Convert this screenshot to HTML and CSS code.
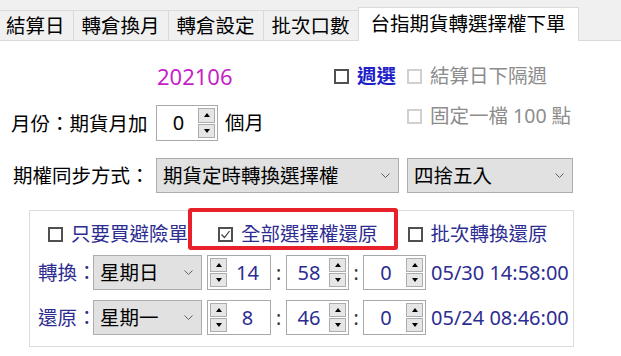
FILE: index.html
```html
<!DOCTYPE html>
<html lang="zh-TW">
<head>
  <meta charset="UTF-8" />
  <title>台指期貨轉選擇權下單</title>
  <meta name="viewport" content="width=device-width, initial-scale=1.0"/>
  <link rel="stylesheet" href="styles.css">
</head>
<body>

  <!-- TABS -->
  <div class="tabs">
    <div class="tab">結算日</div>
    <div class="tab">轉倉換月</div>
    <div class="tab">轉倉設定</div>
    <div class="tab">批次口數</div>
    <div class="tab active">台指期貨轉選擇權下單</div>
  </div>

  <div class="page">

    <!-- MONTH SECTION -->
    <div class="top">
      <div class="top-left">
        <div class="code-row">
          <span class="code">202106</span>
          <span class="chk weekly"><span class="box"></span>週選</span>
        </div>
        <div class="month-row">
          <span class="label">月份<span class="colon">：</span>期貨月加</span>
          <div class="spin month">
            <span class="val">0</span>
            <span class="btns"><i class="up"></i><i class="down"></i></span>
          </div>
          <span class="unit">個月</span>
        </div>
      </div>
      <div class="top-right">
        <span class="chk off"><span class="box"></span>結算日下隔週</span>
        <span class="chk off"><span class="box"></span>固定一檔 100 點</span>
      </div>
    </div>

    <!-- SYNC SECTION -->
    <div class="sync">
      <span class="label">期權同步方式<span class="colon">：</span></span>
      <div class="select wide">期貨定時轉換選擇權
        <svg viewBox="0 0 9 5"><polyline points="0.5,0.5 4.5,4.5 8.5,0.5" /></svg>
      </div>
      <div class="select round">四捨五入
        <svg viewBox="0 0 9 5"><polyline points="0.5,0.5 4.5,4.5 8.5,0.5" /></svg>
      </div>
    </div>

    <!-- RESTORE GROUP -->
    <div class="group">
      <div class="opts">
        <span class="chk"><span class="box"></span>只要買避險單</span>
        <span class="chk"><span class="box"><svg viewBox="0 0 11 11"><polyline points="1.5,5.5 4.5,8.5 9.5,2" /></svg></span>全部選擇權還原</span>
        <span class="chk"><span class="box"></span>批次轉換還原</span>
      </div>

      <div class="when">
        <span class="label">轉換<span class="colon">：</span></span>
        <div class="select day">星期日
          <svg viewBox="0 0 9 5"><polyline points="0.5,0.5 4.5,4.5 8.5,0.5" /></svg>
        </div>
        <div class="spin hour">
          <span class="btns"><i class="up"></i><i class="down"></i></span>
          <span class="val">14</span>
        </div>
        <span class="sep">:</span>
        <div class="spin">
          <span class="val">58</span>
          <span class="btns"><i class="up"></i><i class="down"></i></span>
        </div>
        <span class="sep last">:</span>
        <div class="spin">
          <span class="val">0</span>
          <span class="btns"><i class="up"></i><i class="down"></i></span>
        </div>
        <span class="time">05/30 14:58:00</span>
      </div>

      <div class="when">
        <span class="label">還原<span class="colon">：</span></span>
        <div class="select day">星期一
          <svg viewBox="0 0 9 5"><polyline points="0.5,0.5 4.5,4.5 8.5,0.5" /></svg>
        </div>
        <div class="spin hour">
          <span class="btns"><i class="up"></i><i class="down"></i></span>
          <span class="val">8</span>
        </div>
        <span class="sep">:</span>
        <div class="spin">
          <span class="val">46</span>
          <span class="btns"><i class="up"></i><i class="down"></i></span>
        </div>
        <span class="sep last">:</span>
        <div class="spin">
          <span class="val">0</span>
          <span class="btns"><i class="up"></i><i class="down"></i></span>
        </div>
        <span class="time">05/24 08:46:00</span>
      </div>

      <div class="mark"></div>
    </div>

  </div>

</body>
</html>
```

FILE: styles.css
```css
body {
  margin: 0;
  background: #fff;
  font-family: "Noto Sans", "Noto Sans CJK TC", sans-serif;
  font-size: 19.5px;
  line-height: 24px;
  color: #000;
  white-space: nowrap;
}

/* tabs */
.tabs {
  display: flex;
  align-items: flex-end;
  height: 41px;
  box-sizing: border-box;
  margin-left: -3px;
  background: #f0f0f0;
  border-bottom: 1px solid #dadada;
}

.tab {
  height: 30px;
  line-height: 29px;
  padding: 0 8px;
  box-sizing: border-box;
  border: 1px solid #dadada;
  border-bottom: none;
  margin-right: -1px;
}

.tab.active {
  height: 34px;
  line-height: 32px;
  padding: 0 12px;
  margin-bottom: -1px;
  background: #fff;
}

/* full-width colon: use the narrow glyph and centre it in a full cell */
.colon {
  display: inline-block;
  width: 1em;
  text-align: center;
  font-family: "Noto Sans CJK TC", sans-serif;
  font-feature-settings: "palt" 1;
}

/* checkbox */
.chk {
  display: flex;
  align-items: center;
  height: 30px;
}

.chk .box {
  display: flex;
  align-items: center;
  justify-content: center;
  width: 15px;
  height: 15px;
  box-sizing: border-box;
  border: 2px solid #505050;
  background: #fff;
  margin-right: 8px;
}

.chk .box svg {
  width: 11px;
  height: 11px;
  fill: none;
  stroke: #3a3a3a;
  stroke-width: 1.2;
}

.chk.off {
  color: #8c8c8c;
}

.chk.off .box {
  border-color: #d0d0d0;
}

/* top block */
.top {
  display: flex;
}

.top-left {
  width: 407px;
}

.code-row {
  display: flex;
  align-items: center;
  height: 30px;
  margin-top: 20px;
  padding-left: 157px;
}

.code {
  font-size: 22px;
  color: #c71fc7;
}

.weekly {
  margin-left: auto;
  margin-right: 11px;
  color: #2020c8;
  font-weight: bold;
}

.month-row {
  display: flex;
  align-items: center;
  height: 36px;
  margin-top: 14px;
  padding-left: 11px;
}

.month-row .label {
  width: 145px;
}

.unit {
  margin-left: 7px;
}

.top-right {
  display: flex;
  flex-direction: column;
  gap: 10px;
  margin-top: 20px;
}

/* numeric up-down */
.spin {
  display: flex;
  width: 63px;
  height: 35px;
  box-sizing: border-box;
  border: 1px solid #a9a9a9;
  background: #fff;
  padding: 2px;
}

.spin.month {
  width: 62px;
  height: 36px;
}

.spin.hour {
  width: 64px;
  margin-left: 5px;
}

.spin .val {
  flex: 1;
  text-align: center;
  line-height: 29px;
  font-size: 20px;
}

.btns {
  display: flex;
  flex-direction: column;
  width: 17px;
}

.btns i {
  flex: 1;
  display: flex;
  align-items: center;
  justify-content: center;
  border: 1px solid #adadad;
  background: #e6e6e6;
}

.btns i + i {
  margin-top: 1px;
}

.btns i::after {
  content: "";
  border-left: 3px solid transparent;
  border-right: 3px solid transparent;
}

.btns .up::after {
  border-bottom: 4px solid #000;
}

.btns .down::after {
  border-top: 4px solid #000;
}

/* dropdown */
.select {
  display: flex;
  align-items: center;
  justify-content: space-between;
  height: 35px;
  box-sizing: border-box;
  border: 1px solid #adadad;
  background: #e1e1e1;
  padding: 0 8px 0 6px;
  color: #000;
}

.select svg {
  width: 9px;
  height: 5px;
  fill: none;
  stroke: #606060;
  stroke-width: 1;
}

.sync {
  display: flex;
  align-items: center;
  height: 35px;
  margin-top: 17px;
  padding-left: 13px;
}

.sync .label {
  width: 143px;
}

.select.wide {
  width: 243px;
  margin-right: 8px;
}

.select.round {
  width: 166px;
}

/* group box */
.group {
  position: relative;
  width: 545px;
  box-sizing: border-box;
  margin: 17px 0 0 29px;
  padding: 11px 0;
  border: 1px solid #dcdcdc;
  color: #2d2d91;
}

.opts {
  display: flex;
  gap: 30px;
  height: 24px;
  padding-left: 18px;
}

.opts .chk {
  height: 24px;
}

.when {
  display: flex;
  align-items: center;
  height: 35px;
  margin-top: 9px;
  padding-left: 8px;
}

.when + .when {
  margin-top: 10px;
}

.when .label {
  width: 55px;
}

.select.day {
  width: 109px;
}

.sep {
  width: 15px;
  text-align: center;
  color: #333;
}

.sep.last {
  width: 14px;
}

.time {
  margin-left: 5px;
  font-size: 20px;
}

.mark {
  position: absolute;
  left: 158px;
  top: -3px;
  width: 210px;
  height: 42px;
  box-sizing: border-box;
  border: 4px solid #e8202a;
  border-radius: 3px;
}
```
